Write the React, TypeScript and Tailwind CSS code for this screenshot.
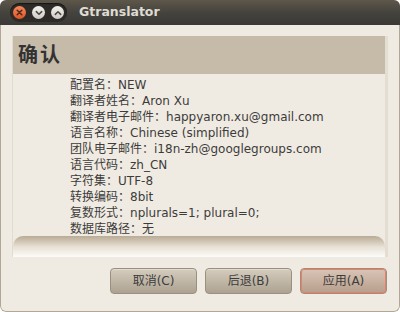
const lines: [string, string][] = [
  ["配置名", "NEW"],
  ["翻译者姓名", "Aron Xu"],
  ["翻译者电子邮件", "happyaron.xu@gmail.com"],
  ["语言名称", "Chinese (simplified)"],
  ["团队电子邮件", "i18n-zh@googlegroups.com"],
  ["语言代码", "zh_CN"],
  ["字符集", "UTF-8"],
  ["转换编码", "8bit"],
  ["复数形式", "nplurals=1; plural=0;"],
  ["数据库路径", "无"],
];

const font = { fontFamily: '"DejaVu Sans", "Noto Sans CJK SC", sans-serif' };

function TitleButtons() {
  return (
    <div className="ml-[10px] flex h-[19px] w-[57px] items-center gap-[6px] rounded-full bg-[#2c2b28] px-[3px] shadow-[inset_0_1px_1px_rgba(0,0,0,0.5)]">
      {/* close */}
      <div className="flex h-[13px] w-[13px] items-center justify-center rounded-full bg-gradient-to-b from-[#f7875a] to-[#dd5423]">
        <svg width="7" height="7" viewBox="0 0 7 7">
          <path d="M1.2 1.2 L5.8 5.8 M5.8 1.2 L1.2 5.8" stroke="#4a2a1c" strokeWidth="1.5" strokeLinecap="round" />
        </svg>
      </div>
      {/* minimize */}
      <div className="flex h-[13px] w-[13px] items-center justify-center rounded-full bg-gradient-to-b from-[#f4f2ee] to-[#cfcbc3]">
        <svg width="8" height="6" viewBox="0 0 8 6">
          <path d="M1.3 1.6 L4 4.3 L6.7 1.6" stroke="#4a4843" strokeWidth="1.5" fill="none" strokeLinecap="round" strokeLinejoin="round" />
        </svg>
      </div>
      {/* maximize */}
      <div className="flex h-[13px] w-[13px] items-center justify-center rounded-full bg-gradient-to-b from-[#f4f2ee] to-[#cfcbc3]">
        <svg width="8" height="6" viewBox="0 0 8 6">
          <path d="M1.3 4.4 L4 1.7 L6.7 4.4" stroke="#4a4843" strokeWidth="1.5" fill="none" strokeLinecap="round" strokeLinejoin="round" />
        </svg>
      </div>
    </div>
  );
}

function DlgButton({ label, focus }: { label: string; focus?: boolean }) {
  return (
    <button
      className="h-[26px] w-[87px] rounded-[4px] border border-[#9b9080] bg-gradient-to-b from-[#d4ccbe] to-[#ada290] p-0 text-[12px] text-[#3c3c3c] shadow-[inset_0_1px_0_rgba(255,255,255,0.35)]"
      style={font}
    >
      <div
        className={
          "flex h-full w-full items-center justify-center rounded-[3px] " +
          (focus ? "border border-[#e87f66] bg-gradient-to-b from-[#d8c3b4] to-[#b9a08e]" : "")
        }
      >
        {label}
      </div>
    </button>
  );
}

export default function App() {
  return (
    <div className="h-[312px] w-[400px] bg-[#ffffff]" style={font}>
      <div className="flex h-[312px] w-[400px] flex-col overflow-hidden rounded-[6px] bg-[#f0ebe2]">
        {/* title bar */}
        <div className="flex h-[25px] shrink-0 items-center bg-gradient-to-b from-[#5e574a] via-[#45433e] to-[#3a3935]">
          <TitleButtons />
          <span className="ml-[12px] text-[12.5px] font-bold text-[#dfdbd2]">Gtranslator</span>
        </div>
        <div className="flex flex-1 flex-col border-x border-b border-[#b0a796] rounded-b-[6px] px-[11px] pt-[11px]">
          {/* frame */}
          <div className="flex h-[221px] flex-col overflow-hidden border-l border-r-[3px] border-l-[#e2dbcf] border-r-[#e4ddd1] bg-[#f0ebe2]">
            <div className="flex h-[38px] shrink-0 items-center bg-[#c6baa8] pl-[5px]">
              <span className="text-[20px] font-bold tracking-[2px] text-[#333333]">确认</span>
            </div>
            <div className="flex h-[162px] shrink-0 flex-col overflow-hidden pl-[57px] pt-[3px] text-[12px] leading-[16px] text-[#3c3c3c]">
              {lines.map(([k, v]) => (
                <div key={k} className="whitespace-nowrap">
                  {k}：{v}
                </div>
              ))}
            </div>
            <div className="h-[21px] shrink-0 rounded-t-[10px] bg-gradient-to-b from-[#b9ab95] via-[#e6dfd3] to-[#fdfcfa]" />
          </div>
          {/* buttons */}
          <div className="mt-[11px] flex justify-end gap-[8px] pr-[1px]">
            <DlgButton label="取消(C)" />
            <DlgButton label="后退(B)" />
            <DlgButton label="应用(A)" focus />
          </div>
        </div>
      </div>
    </div>
  );
}
